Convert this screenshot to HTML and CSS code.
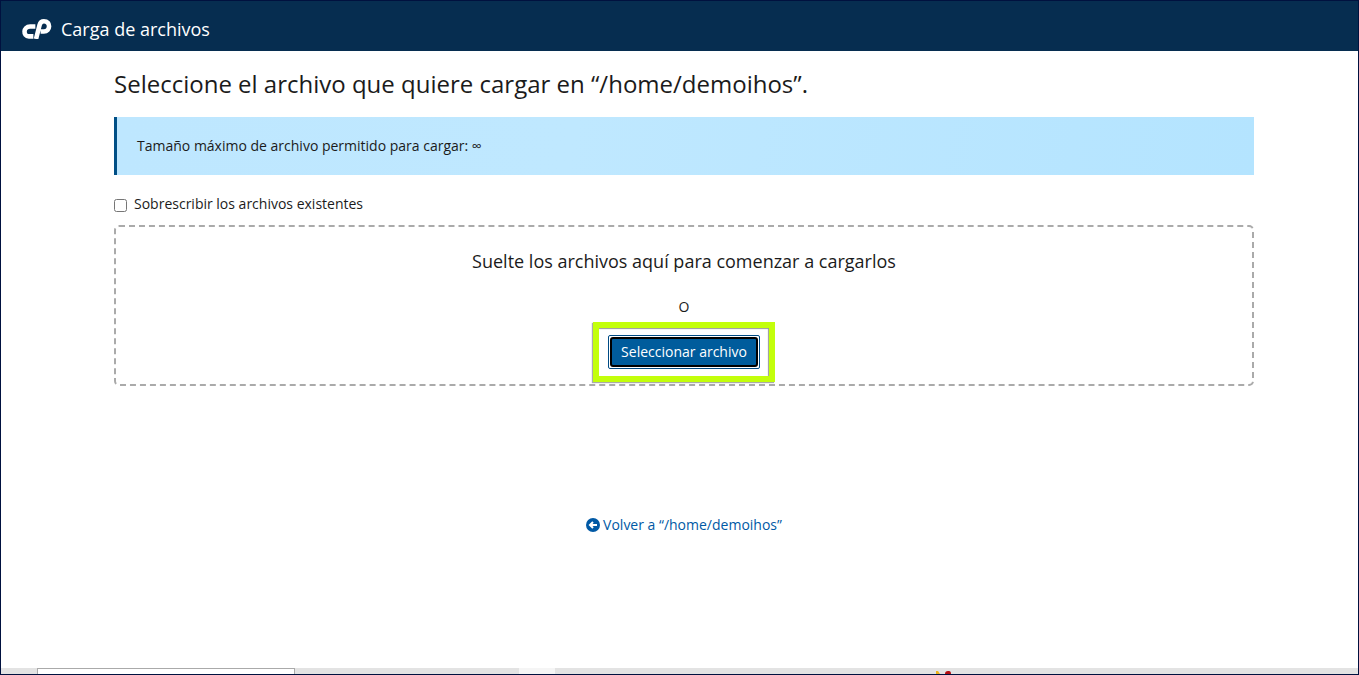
FILE: index.html
```html
<!DOCTYPE html>
<html lang="es">
<head>
<meta charset="utf-8">
<meta name="viewport" content="width=device-width, initial-scale=1">
<title>Carga de archivos</title>
<link rel="stylesheet" href="styles.css">
</head>
<body>
<div class="page">
  <header class="header">
    <svg class="logo" viewBox="0 0 90 61" aria-hidden="true">
      <g fill="none" stroke="#fff" stroke-width="14">
        <path d="M40 23H24C2 23 2 53 20 53H34" />
        <path d="M42 61L53 18Q56 7 66 7C88 7 86 38 66 38H56" />
      </g>
    </svg>
    <span class="header-title">Carga de archivos</span>
  </header>
  <main class="container">
    <h1 class="title">Seleccione el archivo que quiere cargar en “/home/demoihos”.</h1>
    <div class="callout">Tamaño máximo de archivo permitido para cargar: ∞</div>
    <label class="overwrite" for="overwrite">
      <input class="checkbox" type="checkbox" id="overwrite">
      <span>Sobrescribir los archivos existentes</span>
    </label>
    <section class="dropzone">
      <p class="drop-text">Suelte los archivos aquí para comenzar a cargarlos</p>
      <p class="or">O</p>
      <div class="highlight">
        <button class="button" type="button"><span class="button-label">Seleccionar archivo</span></button>
      </div>
    </section>
    <a class="back" href="#">
      <svg class="back-icon" viewBox="0 0 14 14" aria-hidden="true">
        <circle cx="7" cy="7" r="7" fill="#0059a5" />
        <path d="M11 7H4M7 4L4 7L7 10" fill="none" stroke="#fff" stroke-width="2" />
      </svg>
      <span>Volver a “/home/demoihos”</span>
    </a>
  </main>
  <footer class="taskbar">
    <div class="search"></div>
    <div class="active"></div>
    <svg class="badges" viewBox="0 0 18 6" aria-hidden="true">
      <path d="M0 6V3H2L4 6Z" fill="#efb31b" />
      <path d="M9 6Q9 3 12 3H13Q15 3 15 6Z" fill="#b40d12" />
    </svg>
  </footer>
</div>
</body>
</html>
```
FILE: styles.css
```css
* {
  box-sizing: border-box;
}

body {
  margin: 0;
  background: #fff;
  color: #1b1b1b;
  font: 14px/20px "Open Sans", "Noto Sans", sans-serif;
}

.page {
  display: flex;
  flex-direction: column;
  min-height: 100vh;
  border: 1px solid #00113f;
}

.header {
  display: flex;
  align-items: center;
  gap: 9px;
  height: 50px;
  padding: 6px 21px 0;
  background: #062d50;
  color: #fff;
}

.logo {
  width: 30px;
  height: 20px;
}

.header-title {
  font-size: 18px;
  line-height: 24px;
}

.container {
  display: flex;
  flex: 1;
  flex-direction: column;
  width: 100%;
  max-width: 1179px;
  margin: 0 auto;
  padding: 0 15px 0 24px;
}

.title {
  margin: 17px 0;
  font-size: 24px;
  font-weight: 400;
  line-height: 32px;
}

.callout {
  padding: 19px 20px;
  border-left: 3px solid #004f86;
  background: linear-gradient(100deg, #bee7ff, #bfe8ff 40%, #b4e4ff);
}

.overwrite {
  display: flex;
  align-items: center;
  align-self: flex-start;
  gap: 7px;
  margin: 19px 0 11px;
}

.checkbox {
  width: 13px;
  height: 13px;
  margin: 3px 0 0;
}

.dropzone {
  display: flex;
  flex-direction: column;
  align-items: center;
  padding: 22px 20px 2px;
  border: 2px dashed #aaa;
  border-radius: 5px;
}

.drop-text {
  margin: 0 0 23px;
  font-size: 18px;
  line-height: 25px;
}

.or {
  margin: 0 0 5px;
}

.highlight {
  padding: 7px 9px;
  border: 6px solid #c3ff0b;
  box-shadow: -1px 1px 1px #aaa, inset -1px 1px 1px #999;
}

.button {
  display: block;
  padding: 1px;
  border: 1px solid #004b84;
  border-radius: 2px;
  background: #fff;
  color: #fff;
  font: inherit;
}

.button-label {
  display: block;
  padding: 3px 9px;
  border: 2px solid #000;
  border-radius: 3px;
  background: #005c9c;
}

.back {
  display: flex;
  align-items: center;
  align-self: center;
  gap: 3px;
  margin-top: 129px;
  color: #0059a5;
  text-decoration: none;
}

.back-icon {
  width: 14px;
  height: 14px;
}

.taskbar {
  display: flex;
  height: 6px;
  background: #e3e3e3;
}

.search {
  width: 258px;
  margin-left: 36px;
  border: 1px solid #aaa;
  border-bottom: 0;
  background: #fff;
}

.active {
  width: 36px;
  margin-left: 224px;
  background: #f5f5f5;
}

.badges {
  width: 18px;
  height: 6px;
  margin-left: 381px;
}
```
